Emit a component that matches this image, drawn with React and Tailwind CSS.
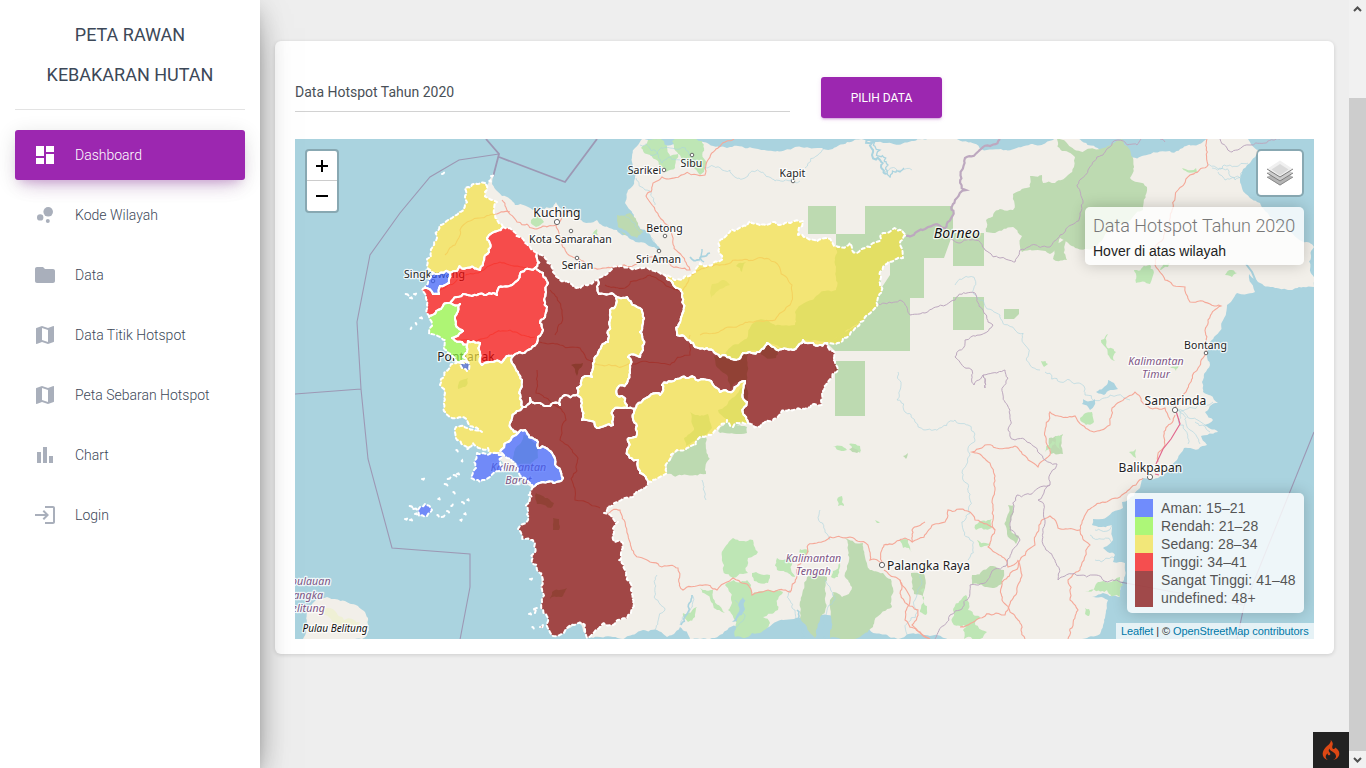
import React from 'react';
import { MdDashboard, MdBubbleChart, MdFolder, MdMap, MdBarChart, MdLogin } from 'react-icons/md';
import { SiCodeigniter } from 'react-icons/si';

const nav = [
  { label: 'Dashboard', Icon: MdDashboard, active: true },
  { label: 'Kode Wilayah', Icon: MdBubbleChart },
  { label: 'Data', Icon: MdFolder },
  { label: 'Data Titik Hotspot', Icon: MdMap },
  { label: 'Peta Sebaran Hotspot', Icon: MdMap },
  { label: 'Chart', Icon: MdBarChart },
  { label: 'Login', Icon: MdLogin },
];

// Deterministic midpoint displacement: an edge shared by two shapes gets the same detail in both.
const hash = (a, b) => {
  const s = Math.sin(a * 12.9898 + b * 78.233) * 43758.5453;
  return (s - Math.floor(s)) * 2 - 1;
};
const split = (p, q, amp, out) => {
  const dx = q[0] - p[0];
  const dy = q[1] - p[1];
  const len = Math.hypot(dx, dy);
  if (len < 3.6) {
    out.push(q);
    return;
  }
  const mx = (p[0] + q[0]) / 2;
  const my = (p[1] + q[1]) / 2;
  const m = [mx + hash(mx, my) * len * amp, my + hash(my, mx) * len * amp];
  split(p, m, amp, out);
  split(m, q, amp, out);
};
const parse = (str) => {
  const n = str.trim().split(/[\s,]+/).map(Number);
  const pts = [];
  for (let i = 0; i < n.length; i += 2) pts.push([n[i], n[i + 1]]);
  return pts;
};
const rough = (str, amp = 0.17, close = false) => {
  const pts = parse(str);
  if (close) pts.push(pts[0]);
  const out = [pts[0]];
  for (let i = 1; i < pts.length; i++) split(pts[i - 1], pts[i], amp, out);
  return 'M' + out.map((p) => p[0].toFixed(1) + ' ' + p[1].toFixed(1)).join('L') + (close ? 'Z' : '');
};

const borneo =
  '493,173 488,184 484,190 488,200 470,230 434,262 430,290 433,330 448,342 455,362 447,372 444,385 449,410 468,422 490,434 480,442 500,460 520,470 532,490 531,518 522,529 538,545 542,585 545,602 555,633 580,624 587,636 600,637 613,637 625,638 643,630 657,630 667,637 680,627 690,639 1082,639 1100,634 1105,618 1108,600 1092,597 1103,593 1120,597 1124,580 1125,563 1113,562 1115,555 1103,548 1113,540 1112,525 1092,525 1093,519 1123,508 1122,502 1140,488 1143,478 1158,478 1177,460 1184,448 1207,445 1201,436 1218,432 1204,425 1213,420 1205,412 1218,403 1203,392 1202,382 1210,365 1207,357 1210,342 1222,322 1227,305 1237,293 1255,292 1249,274 1258,282 1273,287 1288,290 1303,287 1314,287 1314,247 1297,238 1283,228 1270,217 1260,203 1250,198 1242,188 1242,172 1250,163 1258,150 1248,139 642,139 635,148 632,162 635,178 628,190 625,203 636,222 648,232 659,249 645,243 630,238 617,230 603,226 597,220 583,222 573,210 560,208 556,202 553,207 533,210 526,206 515,205 510,199 502,196 496,190 492,184';

const forestBlocks = [
  'M808 206h28v28h-28zM865 206h88v27l-9 25h-20v40h-14v53h-75l-8-8 30-18 33-50V234h-25zM836 234h54v14h-16l-16 8-22-6z',
  'M953 233h31v33h-31zM953 297h31v33h-31zM835 361h30v55h-30zM1004 309h15v5l-5 5h-10z',
];
const forests = [
  '667,463 675,452 690,447 706,437 706,474 667,474', '718,431 727,421 733,427 747,427 747,433 720,433',
  '1057,139 1062,151 1075,157 1074,167 1068,175 1055,183 1043,183 1042,175 1030,176 1030,187 1013,194 1013,210 986,220 986,232 1013,227 1022,236 1022,252 1050,254 1060,238 1070,245 1097,246 1117,225 1143,210 1147,187 1130,178 1130,150 1122,139',
  '1053,245 1067,238 1067,260 1053,259',
  '845,538 863,543 865,557 870,570 883,573 893,588 892,607 877,617 873,627 860,637 830,638 830,607 833,592 842,597 852,587 845,573 848,555',
  '807,577 827,577 825,600 820,620 815,638 807,627 800,613 803,590',
  '1049,438 1063,434 1063,454 1051,454', '1008,505 1014,505 1011,530 1019,536 1016,544 1007,534',
  '972,575 990,566 1004,570 1002,584 985,587 972,584', '911,573 923,573 923,596 914,594', '849,449 855,444 861,450 857,453', '903,456 908,453 906,459',
];
const woods = [
  '641,148 648,140 664,141 670,156 678,154 675,168 666,172 658,161 650,155', '672,141 702,141 707,163 700,175 690,165 677,152',
  '722,557 725,547 733,538 753,540 758,552 748,558 748,573 733,578 723,570', '725,585 747,580 752,595 783,592 777,603 778,610 763,617 770,623 760,633 743,638 735,637 735,620 728,610',
  '700,588 713,590 725,613 717,610 707,595', '683,613 697,607 695,617 688,622', '752,573 770,575 768,583 754,581', '777,558 793,557 795,577 785,572 777,570', '800,549 809,551 806,556 800,554', '833,571 840,563 838,577 831,577',
  '1134,270 1150,265 1150,284 1136,283', '1160,270 1170,263 1168,267 1161,270', '1225,275 1232,270 1237,273 1232,277', '1182,168 1196,168 1197,173 1187,172',
  '1101,340 1108,334 1106,345 1116,352 1115,361 1109,356', '1041,361 1048,364 1044,367', '1084,414 1092,412 1094,422 1086,425 1080,418',
  '1045,452 1052,441 1055,442 1050,449', '1055,437 1063,434 1063,452 1057,447', '1129,452 1136,449 1136,458', '975,525 992,519 992,528 976,530', '977,540 991,543 980,547', '961,600 966,595 968,610 980,617 974,631 964,625 952,622',
  '963,630 975,625 987,632 980,639 964,639', '900,540 908,540 912,552 903,548', '920,590 925,588 926,615 920,612', '1085,592 1098,582 1120,577 1123,585 1120,597 1107,590 1085,592', '1085,608 1089,609 1089,616 1085,614',
  '833,446 842,446 847,450 838,450', '849,444 860,446 860,453', '837,500 842,496 844,506 838,506', '875,520 880,523 877,523', '1170,368 1179,365 1176,371', '592,235 597,229 598,235', '531,220 540,217 544,222 536,227',
];
const redRoads = [
  '502,200 508,212 517,222 535,229 556,225 572,212', '497,214 510,212', '556,225 562,245 577,258 593,268 605,268 650,257 690,270 678,252 672,235 667,225 655,210 646,196 653,183 662,177 705,175 708,160 716,149 734,139',
  '605,515 620,510 625,522 628,535 635,555 650,562 678,568 683,590 700,585 717,590 733,578 747,584 752,595 768,590 783,590 790,592 798,565 808,545 830,537 850,537 868,545 870,560 882,563 884,545 905,538 912,542 912,530 925,522',
  '884,570 900,580 908,605 918,610 912,625 930,639', '1207,139 1208,165 1190,175 1178,190 1172,210 1155,265 1165,280 1185,287 1190,302 1210,304 1221,306 1208,320 1205,355 1190,383 1186,392 1175,408',
  '1175,415 1165,445 1158,462', '1143,478 1120,497 1110,500 1088,510 1080,530 1090,545 1080,570 1068,580 1070,600 1078,610 1068,639',
  '912,542 935,524 945,522 948,510 963,509 975,520 995,530 988,547 1008,567 1018,560 1022,575 1012,600 1005,615 960,627', '995,530 995,490 990,463 972,452 985,445 1015,446 1038,467 1050,455 1050,412 1075,416 1094,432 1110,425 1112,408 1135,392 1145,405 1165,408 1170,420', '1080,530 1058,528 1050,516 1042,520 1035,545 1020,560 1002,582 1002,600 1010,612 1018,620 1025,639', '900,580 910,600 905,620 930,639',
];
const rivers = [
  '640,145 655,150 662,163 680,160 700,165 722,170 745,178 775,181 800,181', '805,168 818,155 840,140', '885,172 895,168 912,170', '660,249 652,238 638,230 632,222 625,215', '636,178 645,190 655,205', '700,165 690,155 670,148 650,155',
  '898,372 900,390 897,400 905,412 915,422 925,430 940,428 955,420 968,425 975,440 970,455 963,480 970,500 965,520 970,540 968,560', '955,285 975,280 983,300 1000,315 1015,330 1025,345 1030,365 1040,370', '692,595 690,610 680,625', '735,600 745,615 735,630', '790,590 795,610 805,639', '825,580 835,600 825,639', '1045,372 1060,382 1085,395 1110,395 1130,400', '1178,410 1200,405 1213,402', '1178,410 1205,425', '1178,410 1190,430 1200,444', '1195,422 1210,432', '1180,412 1185,430 1188,444', '1212,168 1235,180 1242,172', '1208,165 1230,165 1248,163', '1218,172 1225,180 1240,178', '702,480 706,500', '820,510 825,530 830,540', '657,575 665,610 655,630', '920,575 915,600 905,639', '1303,155 1312,168', '1112,525 1095,530', '1112,545 1090,535', '1125,563 1095,560',
];
const adminThick = '1000,139 990,146 965,158 962,170 966,190 955,200 953,215 945,228 928,227 906,236';
const thinAdmin = [
  '945,228 953,240 960,243 970,240 985,250 1000,258 1015,262 1020,250 1050,247 1060,235 1080,213 1088,170 1103,155 1118,140 1137,145 1141,139', '1160,139 1165,142', '1220,139 1232,152 1250,145 1280,139', '877,304 900,300 910,315 925,313 950,302 975,293 983,310 993,325 980,335 965,340 955,357 972,370 974,385 983,375 985,388', '985,388 983,375 1005,370 1008,378 1003,395 1010,415 1008,430 1015,440 1030,443 1045,460 1057,464 1050,485 1017,495 1010,530 1020,540 1006,566 970,585 960,610 950,615 935,639',
  '1050,485 1038,500 1045,520 1046,550 1055,560 1058,580 1065,576 1095,575 1120,582',
];

const C = { y: '#f4e143', r: '#f80707', g: '#91f842', b: '#3a5ffd', m: '#7f0000' };
const regions = [
  [C.y, '485,183 477,184 465,188 465,197 459,212 452,218 440,225 437,238 432,248 431,257 427,259 430,270 433,273 450,273 480,270 483,263 489,252 487,238 492,233 503,227 495,215 497,202 488,198 485,192'],
  [C.b, '433,273 450,273 449,283 440,286 439,294 433,294 425,288'],
  [C.r, '503,227 507,228 522,238 525,243 537,253 535,268 521,272 518,280 512,285 499,287 497,295 472,296 463,294 457,297 450,303 438,310 429,316 427,305 426,295 422,290 425,288 433,294 439,294 440,286 449,283 450,273 480,270 483,263 489,252 487,238 492,233'],
  [C.r, '535,268 543,273 548,283 546,292 547,307 545,317 540,323 543,330 538,337 537,343 528,350 513,356 490,362 482,365 480,352 480,343 468,341 467,345 462,342 452,338 463,331 455,319 460,304 450,303 457,297 463,294 472,296 497,295 499,287 512,285 518,280 521,272'],
  [C.g, '429,316 438,310 450,303 460,304 455,319 463,331 452,338 462,342 467,345 467,362 457,362 448,353 445,340 429,334'],
  [C.y, '467,345 468,341 480,343 480,352 482,365 490,362 513,356 512,363 518,372 522,380 520,390 523,407 510,423 518,433 512,437 501,450 495,455 488,448 473,443 468,448 457,440 456,427 467,428 482,432 474,428 467,420 450,417 446,413 445,393 440,385 448,370 457,362 467,362'],
  [C.b, '461,363 468,362 467,371 462,368'],
  [C.b, '525,430 538,442 538,448 552,453 557,467 563,478 547,482 533,487 525,478 518,467 507,458 501,450 512,437 518,433'],
  [C.b, '477,453 502,455 503,470 490,477 480,482 471,478 476,468'],
  [C.b, '420,507 425,504 432,510 427,516 419,516'],
  [C.m, '523,407 530,398 537,403 553,403 560,405 565,395 577,395 582,403 582,420 597,428 613,425 613,410 627,408 635,409 637,433 627,450 638,460 640,473 648,482 633,497 617,502 604,513 612,517 618,522 614,533 615,542 623,543 625,570 631,590 631,613 613,625 600,627 587,638 582,623 567,628 553,636 548,618 542,602 543,593 537,570 535,543 518,529 528,520 530,497 533,487 547,482 563,478 557,467 552,453 538,448 538,442 525,430 518,433 510,423'],
  [C.m, '537,253 547,260 553,272 570,283 582,286 598,280 599,294 617,297 615,307 610,320 608,342 595,357 592,377 582,378 577,388 577,395 565,395 560,405 553,403 537,403 530,398 523,407 520,390 522,380 518,372 512,363 513,356 528,350 537,343 538,337 543,330 540,323 545,317 547,307 546,292 548,283 543,273 535,268'],
  [C.y, '617,297 627,297 642,310 640,332 643,350 640,357 628,357 630,373 627,383 617,395 627,408 613,410 613,425 597,428 582,420 582,403 577,395 577,388 582,378 592,377 595,357 608,342 610,320 615,307'],
  [C.m, '598,280 610,271 638,268 665,275 667,279 682,295 682,315 677,335 695,347 707,348 720,357 743,353 767,343 793,350 803,340 813,343 827,343 835,353 838,370 827,383 822,405 800,409 777,418 760,427 748,423 747,402 743,390 745,381 720,392 712,383 682,377 662,385 660,395 635,409 627,408 617,395 627,383 630,373 628,357 640,357 643,350 640,332 642,310 627,297 617,297 599,294'],
  [C.y, '635,409 660,395 662,385 682,377 712,383 720,392 745,381 743,390 747,402 748,423 733,427 727,420 718,428 700,437 690,447 677,450 667,463 667,473 648,482 640,473 638,460 627,450 637,433'],
  [C.y, '665,275 695,272 700,263 720,261 727,235 750,221 775,222 803,221 798,235 827,238 838,247 850,243 857,253 873,243 883,233 902,230 906,235 903,258 888,262 880,272 882,292 875,308 860,322 843,338 827,343 813,343 803,340 793,350 767,343 743,353 720,357 707,348 695,347 677,335 682,315 682,295 667,279'],
  [C.m, '534,609 537,608 535,613'],
  [C.m, '540,627 543,625 542,628'],
];

// Edges that occur in two regions are inner borders.
const innerBorders = (() => {
  const seen = new Set();
  const shared = [];
  regions.forEach(([, d]) => {
    const pts = parse(d);
    pts.forEach((p, i) => {
      const q = pts[(i + 1) % pts.length];
      const key = [p.join(), q.join()].sort().join(' ');
      if (seen.has(key)) shared.push(key);
      seen.add(key);
    });
  });
  return shared;
})();

const islets = [[443, 175, 3], [407, 294, 4], [411, 297, 3], [415, 295, 3], [421, 318, 3], [416, 322, 1], [411, 330, 1], [411, 506, 4], [415, 508, 5], [406, 520, 3], [411, 520, 3], [446, 483, 4], [449, 480, 4], [455, 475, 4], [458, 473, 3], [423, 480, 3], [439, 499, 2], [448, 510, 3], [452, 507, 2], [463, 502, 3], [468, 499, 2], [461, 521, 2], [465, 514, 2], [438, 514, 2], [443, 518, 4], [457, 450, 2], [462, 460, 1], [531, 580, 3], [530, 614, 3], [533, 626, 2], [468, 450, 2], [454, 492, 2], [416, 513, 3], [492, 177, 3], [490, 181, 2], [530, 494, 4], [518, 485, 2]];

// Texture of the base tiles that shows faintly through the shaded regions.
const inland = [
  ['836,240 836,290 820,293 812,300 795,312 795,325 780,325 768,320 752,324 748,335 733,345 720,357 743,353 767,343 793,350 803,340 827,343 860,322 875,308 882,292 880,272 888,262 903,258 905,235 883,233 857,253', '#bddab1'],
  ['690,412 700,416 708,414 712,428 700,438 686,446 684,438 694,430', '#bddab1'],
  ['718,410 732,398 745,385 747,402 748,423 733,427 727,420 720,414', '#bddab1'],
  ['714,356 747,352 747,380 730,390 727,375 716,366', '#bddab1'],
  ['757,346 770,344 780,348 776,358 764,356', '#bddab1'],
  ['514,452 524,434 538,444 538,458 526,470 512,462', '#bddab1'],
  ['536,493 554,503 551,508 537,504', '#bddab1'], ['553,518 559,519 559,530 553,530', '#bddab1'], ['552,592 567,588 562,597 550,599', '#bddab1'],
  ['571,365 583,363 577,376', '#a9c69b'], ['459,382 468,378 465,387 458,389', '#bddab1'], ['712,284 722,280 730,285 720,289 711,298', '#d3e4c6'], ['736,266 746,262 742,272', '#bddab1'],
];
const inlandRoads = ['445,255 455,245 460,230 480,218 497,214', '440,290 460,275 480,272 500,262 535,270', '460,340 490,335 510,330 535,337', '537,340 560,345 580,348 600,365 640,362 670,365 690,355 690,335', '537,370 536,393 560,408 566,420 560,440 578,458 575,500 600,508', '680,292 705,268 740,260 775,262 792,285 790,305 775,320 740,325 700,335', '605,285 625,288 650,275 680,290', '550,290 562,310 555,335'];

const places = [
  ['Kuching', 557, 217, 12.2, 557, 222], ['Kota Samarahan', 570.5, 243, 10.5, 571, 231], ['Serian', 577.5, 269, 10.5, 577, 258],
  ['Betong', 664.5, 232, 10.5, 665, 236], ['Sri Aman', 658.5, 263, 10.5, 659, 251], ['Sarikei', 644.5, 174, 10.5, 664, 170],
  ['Sibu', 691.5, 167, 10.5, 692, 155], ['Kapit', 792.5, 177, 10.5, 793, 181], ['Bontang', 1205.5, 349, 10.5, 1206, 353],
  ['Samarinda', 1175.5, 405, 12, 1175, 410], ['Balikpapan', 1150.5, 472, 12, 1150, 477], ['Palangka Raya', 928.5, 570, 12, 882, 565],
  ['Singkawang', 434.5, 278, 10.5, 433, 281], ['Pontianak', 466, 361, 12, 465, 366],
];
const provinces = [
  ['Kalimantan', 813.5, 562], ['Tengah', 813.5, 575], ['Kalimantan', 1156, 365], ['Timur', 1156, 378],
  ['Kalimantan', 518.5, 471], ['Barat', 518.5, 484], ['Kepulauan', 305, 585], ['Bangka', 305, 599], ['Belitung', 305, 612],
];
const halo = { paintOrder: 'stroke', stroke: '#fff', strokeOpacity: 0.8, strokeWidth: 2.5, strokeLinejoin: 'round' };

function HotspotMap() {
  return (
    <svg className="block h-full w-full" viewBox="295 139 1019 500" fontFamily='"Noto Sans", sans-serif'>
      <rect x="295" y="139" width="1019" height="500" fill="#aad3df" />
      <path d={rough(borneo, 0.13, true)} fill="#f2efe9" />
      {regions.map(([, d]) => <path key={d} d={rough(d, 0.22, true)} fill="#f2efe9" />)}
      <path d={rough('303,639 306,625 308,610 316,600 327,597 345,601 358,606 368,618 369,630 362,639', 0.13, true)} fill="#f2efe9" />
      <path d={rough('322,608 336,612 344,620 360,622 356,630 342,626 330,618', 0.2, true)} fill="#eff0d5" />
      {forestBlocks.map((d) => <path key={d} d={d} fill="#bddab1" />)}
      {forests.map((d) => <path key={d} d={rough(d, 0.16, true)} fill="#bddab1" />)}
      {woods.map((d) => <path key={d} d={rough(d, 0.2, true)} fill="#bee6b5" />)}
      <path d={rough('617,215 630,213 638,223 643,232 637,238 625,235 618,228', 0.15, true)} fill="#bddab1" />
      {['1083,399 1090,401 1095,399 1094,406 1090,410 1082,404', '1096,392 1104,387 1108,380 1114,383 1118,389 1108,391 1104,395', '738,613 743,597 745,609 737,621 732,622'].map((d) => (
        <path key={d} d={rough(d, 0.2, true)} fill="#aad3df" />
      ))}
      <g fill="none" stroke="#aad3df" strokeWidth="0.8" strokeOpacity="0.75">
        {rivers.map((d) => <path key={d} d={rough(d, 0.24)} />)}
      </g>
      <g fill="none" stroke="#aad3df">
        <path d={rough('617,228 630,237 645,241 654,244 659,250', 0.12)} strokeWidth="3" />
        <path d={rough('867,139 873,150 872,155 880,160 881,167 886,174', 0.35)} strokeWidth="2" />
        <path d={rough('870,142 880,150 878,156 888,165 886,174 900,172 904,168', 0.35)} strokeWidth="1.3" />
        <path d={rough('692,595 688,612 681,625', 0.2)} strokeWidth="1.6" />
        <path d={rough('797,610 802,639', 0.2)} strokeWidth="1.6" />
        <path d="M1246 264l6 8 5 12 3 4" strokeWidth="2" />
        <path d={rough('690,257 697,260 710,253', 0.25)} strokeWidth="1.800" />
        <path d={rough('702,249 700,258 704,262', 0.25)} strokeWidth="1.4" />
      </g>
      <g fill="none" stroke="#f5a898" strokeWidth="1.1">
        {redRoads.map((d) => <path key={d} d={rough(d, 0.15)} />)}
        <path d="M1176 411l4 13-9 15-8 10-7 15M1155 474l4 1" stroke="#e2688e" strokeWidth="1.2" />
      </g>
      <g fill="none" stroke="#bda8bf">
        <path d={rough(adminThick, 0.2)} strokeWidth="2.2" />
        {thinAdmin.map((d) => <path key={d} d={rough(d, 0.17)} strokeWidth="1" />)}
      </g>
      <g fill="none" stroke="#9d98b4">
        <path d="M486 139l13 15-6 23M499 157l66 25 32-43" strokeWidth="1.8" />
        <path d="M499 154l-40 6-29 17-30 36-30 42-13 67 4 67 7 70 24 89 78 6v33l-11 58M295 394l66-5M1314 432l-70 174-7 33M1120 582l123 23" strokeWidth="1.1" />
      </g>
      {inland.map(([d, f]) => <path key={d} d={rough(d, 0.15, true)} fill={f} />)}
      <g fill="none" stroke="#f5b09f" strokeWidth="1.1">
        {inlandRoads.map((d) => <path key={d} d={rough(d, 0.13)} />)}
      </g>
      {places.map(([t, x, y, s, cx, cy]) => (
        <g key={t}>
          <circle cx={cx} cy={cy} r={s > 11 ? 2.6 : 1.8} fill="#fff" stroke="#666" strokeWidth="1" />
          <text x={x} y={y} fontSize={s} letterSpacing="0.1" textAnchor="middle" fill="#222" {...halo}>{t}</text>
        </g>
      ))}
      {provinces.map(([t, x, y]) => (
        <text key={t + x + y} x={x} y={y} fontSize="10.6" letterSpacing="0.1" fontStyle="italic" textAnchor="middle" fill="#7c5584" {...halo}>{t}</text>
      ))}
      <text x="957" y="238" fontSize="14" letterSpacing="0.3" fontStyle="italic" textAnchor="middle" fill="#111" {...halo}>Borneo</text>
      <text x="335" y="632" fontSize="10" fontStyle="italic" textAnchor="middle" fill="#111" {...halo}>Pulau Belitung</text>
      {regions.map(([c, d], i) => (
        <path key={d} d={rough(d, 0.22, true)} fill={c} fillOpacity="0.7" stroke="#fff" strokeWidth="2" strokeDasharray="3" strokeDashoffset={i % 2 ? 3 : 0} strokeLinecap="round" strokeLinejoin="round" />
      ))}
      <g fill="none" stroke="#fff" strokeWidth="2" strokeLinecap="round" strokeLinejoin="round">
        {innerBorders.map((d) => <path key={d} d={rough(d, 0.22)} />)}
      </g>
      <g fill="none" stroke="#fff" strokeWidth="2" strokeLinecap="round">
        {islets.map(([x, y, w], i) => <path key={x + '-' + y} d={`M${x - w / 3} ${y + (i % 3) - 1}l${w / 2} ${(i % 2) - 0.5}l${w / 5} ${i % 3 ? 1 : -1}`} />)}
      </g>
    </svg>
  );
}

const legend = [
  ['bg-[#3a5ffd]', 'Aman: 15–21'],
  ['bg-[#91f842]', 'Rendah: 21–28'],
  ['bg-[#f4e143]', 'Sedang: 28–34'],
  ['bg-[#f80707]', 'Tinggi: 34–41'],
  ['bg-[#7f0000]', 'Sangat Tinggi: 41–48'],
  ['bg-[#7f0000]', 'undefined: 48+'],
];

function LayersIcon() {
  return (
    <svg width="26" height="26" viewBox="0 0 26 26">
      <path d="M0 17l13-8 13 8-13 8.500z" fill="#b4b4b4" />
      <path d="M0 17l13 8 13-8" fill="none" stroke="#8a8a8a" />
      <path d="M0 13l13-8 13 8-13 8.500z" fill="#cccccc" />
      <path d="M0 13l13 8 13-8" fill="none" stroke="#7c7c7c" />
      <path d="M0 9l13-8.500 13 8.500-13 8z" fill="#f0f0f0" />
      <path d="M4.500 9.500l8.500-5.500 8.500 5.500-8.500 6z" fill="#dadada" />
      <path d="M0 9l13 8 13-8" fill="none" stroke="#7c7c7c" />
    </svg>
  );
}

export default function App() {
  return (
    <div className="flex h-screen w-full overflow-hidden bg-[#eeeeee] font-['Roboto',sans-serif]">
      <aside className="relative z-10 w-[260px] shrink-0 bg-white px-[15px] shadow-[0_16px_38px_-12px_rgba(0,0,0,0.56),0_4px_25px_0_rgba(0,0,0,0.12),0_8px_10px_-5px_rgba(0,0,0,0.2)]">
        <h1 className="h-[110px] border-b border-[#e3e3e3] pt-[15px] text-center text-[18px] leading-[40px] text-[#3c4858]">
          PETA RAWAN
          <br />
          KEBAKARAN HUTAN
        </h1>
        <nav className="mt-5 flex flex-col gap-2.5">
          {nav.map(({ label, Icon, active }) => (
            <a
              key={label}
              className={
                active
                  ? 'flex h-[50px] items-center rounded-[3px] bg-[#9c27b0] pl-[18px] text-[14px] font-light text-white shadow-[0_12px_20px_-10px_rgba(156,39,176,0.28),0_4px_20px_0_rgba(0,0,0,0.12),0_7px_8px_-5px_rgba(156,39,176,0.2)]'
                  : 'flex h-[50px] items-center rounded-[3px] pl-[18px] text-[14px] font-light text-[#3c4858]'
              }
            >
              <Icon size={24} className={active ? 'text-white' : 'text-[#a9afbb]'} />
              <span className="ml-[18px]">{label}</span>
            </a>
          ))}
        </nav>
      </aside>

      <main className="min-w-0 flex-1 pr-[15px] pl-[15px]">
        <section className="mt-[41px] h-[613px] rounded-[6px] bg-white px-5 pt-9 shadow-[0_1px_4px_0_rgba(0,0,0,0.14)]">
          <div className="flex h-[62px] items-start">
            <div className="h-[35px] w-[495px] border-b border-[#d2d2d2] text-[14px] leading-[30px] text-[#495057]">Data Hotspot Tahun 2020</div>
            <button className="ml-[31px] h-[41px] w-[121px] rounded-[3px] bg-[#9c27b0] text-[12px] text-white shadow-[0_2px_2px_0_rgba(156,39,176,0.14),0_3px_1px_-2px_rgba(156,39,176,0.2),0_1px_5px_0_rgba(156,39,176,0.12)]">
              PILIH DATA
            </button>
          </div>
          <div className="relative h-[500px] w-[1019px] overflow-hidden">
            <HotspotMap />
            <div className="absolute top-[10px] left-[10px] h-[64px] w-[34px] rounded-[4px] border-2 border-black/20 bg-white bg-clip-padding">
              <div className="grid h-[30px] place-items-center border-b border-[#ccc]">
                <svg width="12" height="12" viewBox="0 0 12 12"><path d="M0 6h12M6 0v12" stroke="#000" strokeWidth="2" /></svg>
              </div>
              <div className="grid h-[30px] place-items-center">
                <svg width="12" height="12" viewBox="0 0 12 12"><path d="M0 6h12" stroke="#000" strokeWidth="2" /></svg>
              </div>
            </div>
            <div className="absolute top-[10px] right-[10px] grid h-[48px] w-[48px] place-items-center rounded-[5px] border-2 border-black/20 bg-white bg-clip-padding">
              <LayersIcon />
            </div>
            <div className="absolute top-[68px] right-[10px] h-[58px] w-[219px] rounded-[5px] bg-white/80 px-2 pt-1.5 whitespace-nowrap shadow-[0_0_15px_rgba(0,0,0,0.2)]">
              <h4 className="text-[18px] leading-[25px] font-light text-[#777]">Data Hotspot Tahun 2020</h4>
              <p className="font-['Liberation_Sans',sans-serif] text-[14px] leading-[26px] text-[#222]">Hover di atas wilayah</p>
            </div>
            <div className="absolute right-[10px] bottom-[26px] flex h-[120px] w-[177px] flex-col rounded-[5px] bg-white/80 px-2 py-1.5 font-['Liberation_Sans',sans-serif] text-[14px] leading-[18px] tracking-[0.12px] whitespace-nowrap text-[#555] shadow-[0_0_15px_rgba(0,0,0,0.2)]">
              {legend.map(([color, text]) => (
                <div key={text} className="flex">
                  <i className={'mr-2 h-[18px] w-[18px] opacity-70 ' + color} />
                  {text}
                </div>
              ))}
            </div>
            <div className="absolute right-0 bottom-0 h-4 w-[198px] bg-white/70 pl-[5px] font-['Liberation_Sans',sans-serif] text-[11px] leading-4 tracking-[-0.1px] whitespace-nowrap text-[#333]">
              <span className="text-[#0078a8]">Leaflet</span> | © <span className="text-[#0078a8]">OpenStreetMap contributors</span>
            </div>
          </div>
        </section>
      </main>

      <div className="relative flex w-[17px] shrink-0 flex-col bg-[#f1f1f1]">
        <div className="grid h-[17px] place-items-center">
          <svg width="9" height="6" viewBox="0 0 9 6"><path d="M1 5l3.500-3.500L8 5" fill="none" stroke="#505050" strokeWidth="2" /></svg>
        </div>
        <div className="mt-[81px] h-[653px] bg-[#cdcdcd]" />
        <div className="grid h-[17px] place-items-center">
          <svg width="9" height="6" viewBox="0 0 9 6"><path d="M1 1l3.500 3.500L8 1" fill="none" stroke="#505050" strokeWidth="2" /></svg>
        </div>
        <div className="absolute right-[17px] bottom-0 grid h-9 w-9 place-items-center bg-[#222]">
          <SiCodeigniter size={20} className="text-[#dd4814]" />
        </div>
      </div>
    </div>
  );
}
